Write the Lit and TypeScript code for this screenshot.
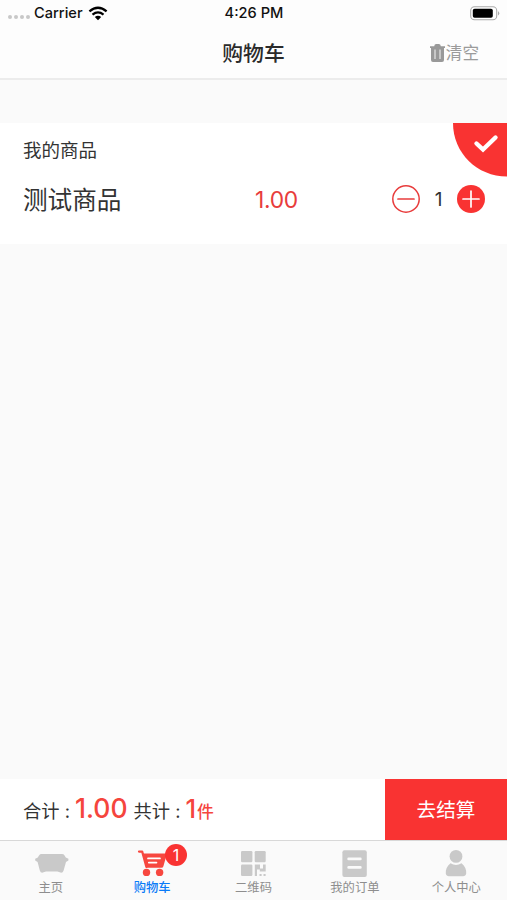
import { LitElement, html, css, svg } from "lit";
import { customElement, property, state } from "lit/decorators.js";
import { classMap } from "lit/directives/class-map.js";

const icons: Record<string, unknown> = {
  home: svg`<path d="M10.5 8H31Q32.6 8 33.6 9.4L34.8 11.4L37.4 12.8V14.4L35 16L32.6 24.4Q31.9 26.9 29.6 26.6L26.4 25.6H15L11.8 26.6Q9.5 26.9 8.8 24.4L6.6 16L4.2 14.4V12.8L6.8 11.4L8 9.4Q9 8 10.5 8Z"/>`,
  cart: svg`
    <path d="M7 5.6H10.2L14.4 21" fill="none" stroke="currentColor" stroke-width="2.2" stroke-linecap="round" stroke-linejoin="round"/>
    <path d="M10.5 7.4H35L31.4 20.2Q31 21.8 29.4 21.8H14.4Z"/>
    <path d="M16 12.4H28M16.8 16.6H24.5" stroke="#fff" stroke-width="1.7" stroke-linecap="round"/>
    <circle cx="14.5" cy="26.4" r="3.7"/><circle cx="27.6" cy="26.4" r="3.7"/>`,
  qr: svg`<rect x="8" y="5" width="11.4" height="11.3" rx="1.2"/><rect x="21.7" y="5" width="11" height="11.3" rx="1.2"/><rect x="8" y="18.6" width="11.4" height="11.4" rx="1.2"/>
    <path d="M21.8 18.6H27V22.6H30V18.6H32.7V25.6H26.8V23.6H24V30H21.8ZM26.5 28H28.6V30H26.5ZM30.5 28H32.6V30H30.5Z"/>`,
  order: svg`<rect x="7.4" y="4.3" width="24.4" height="26.6" rx="2"/><path d="M13.6 12.9H25.4M13.6 21.4H25.4" stroke="#fafafa" stroke-width="2.6" stroke-linecap="round"/>`,
  user: svg`<circle cx="20" cy="10.4" r="6.4"/><path d="M14.5 17.3Q20 20.5 25.5 17.3C29 20 30.6 24 30.2 27.5Q29.7 30.2 27 30.2H13Q10.3 30.2 9.8 27.5C9.4 24 11 20 14.5 17.3Z"/>`,
};

@customElement("status-bar")
class StatusBar extends LitElement {
  static styles = css`
    :host { display: grid; grid-template-columns: 1fr auto 1fr; align-items: center; height: 26px; padding: 0 7px 0 8px; box-sizing: border-box; font: 500 14.6px/26px Inter, sans-serif; color: #111; }
    .left { display: flex; align-items: center; }
    .dots { display: flex; gap: 2px; margin: 8px 4px 0 0; }
    .dot { width: 4px; height: 4px; border-radius: 50%; background: #c8c8c8; }
    .wifi { margin-left: 5px; }
    .battery { justify-self: end; }
    svg { display: block; }
  `;
  render() {
    return html`
      <div class="left">
        <div class="dots">${[0, 1, 2, 3].map(() => html`<i class="dot"></i>`)}</div>
        <span>Carrier</span>
        <svg class="wifi" width="20" height="15" viewBox="0 0 20 15">
          <path d="M1.4 5.3Q10-1.9 18.6 5.3M4.5 8.6Q10 4.2 15.5 8.6" fill="none" stroke="#000" stroke-width="2.3"/>
          <path d="M6.8 11Q10 8.4 13.2 11L10 14.2Z"/>
        </svg>
      </div>
      <span>4:26 PM</span>
      <svg class="battery" width="30" height="15" viewBox="0 0 30 15">
        <rect x=".7" y=".8" width="26" height="13" rx="3.8" fill="#fff" stroke="#aaa" stroke-width="1.1"/>
        <rect x="2.8" y="2.8" width="20" height="9" rx="1.8"/>
        <path d="M28 5Q30.6 7.3 28 9.6Z" fill="#aaa"/>
      </svg>`;
  }
}

@customElement("cart-item")
class CartItem extends LitElement {
  @property() shop = "";
  @property() name = "";
  @property() price = "";
  @property({ type: Number }) count = 1;
  static styles = css`
    :host { display: block; position: relative; height: 121px; box-sizing: border-box; padding: 13px 22px 0 23px; background: #fff; color: #333; font-family: Inter, "Noto Sans CJK SC", sans-serif; }
    .shop { font-size: 18.5px; line-height: 28px; }
    .row { display: grid; grid-template-columns: 232px 1fr auto; align-items: center; height: 40px; margin-top: 15px; }
    .name { font-size: 24.6px; line-height: 42px; }
    .price { font-size: 22.8px; line-height: 42px; color: #e83c3c; letter-spacing: -0.3px; }
    .row > span { height: 40px; }
    .stepper { display: flex; align-items: center; }
    .count { width: 37px; text-align: center; font-size: 19px; }
    svg { display: block; }
    .corner { position: absolute; top: 0; right: 0; }
  `;
  render() {
    return html`
      <div class="shop">${this.shop}</div>
      <div class="row">
        <span class="name">${this.name}</span>
        <span class="price">${this.price}</span>
        <div class="stepper">
          <svg width="28" height="28" viewBox="0 0 28 28" fill="none" stroke="#e83c3c" stroke-width="1.5"><circle cx="14" cy="14" r="13.2"/><path d="M6 14H22" stroke-width="1.7" stroke-linecap="round"/></svg>
          <span class="count">${this.count}</span>
          <svg width="28" height="28" viewBox="0 0 28 28"><circle cx="14" cy="14" r="14" fill="#f93332"/><path d="M6 14H22M14 6V22" stroke="#fff" stroke-width="1.7" stroke-linecap="round"/></svg>
        </div>
      </div>
      <svg class="corner" width="54" height="54" viewBox="0 0 54 54">
        <path d="M0 0H54V53.5C24 53.5 0 30 0 0Z" fill="#f93332"/>
        <path d="M23.5 20.5L30 26.5L42.5 14.5" fill="none" stroke="#fff" stroke-width="4.4" stroke-linecap="round" stroke-linejoin="miter"/>
      </svg>`;
  }
}

@customElement("tab-bar")
class TabBar extends LitElement {
  @property({ type: Number }) badge = 0;
  @state() private active = "cart";
  private tabs = [["home", "主页"], ["cart", "购物车"], ["qr", "二维码"], ["order", "我的订单"], ["user", "个人中心"]];
  static styles = css`
    :host { display: grid; grid-template-columns: repeat(5, 1fr); height: 60px; box-sizing: border-box; border-top: 1px solid #d8d8d8; background: #fafafa; font-family: "Noto Sans CJK SC", sans-serif; }
    .tab { display: flex; flex-direction: column; align-items: center; padding-top: 5px; color: #8e8e8e; }
    .icon { position: relative; width: 40px; height: 32px; color: #c9c9c9; }
    .icon svg { display: block; fill: currentColor; }
    .label { font-size: 12.3px; line-height: 18px; white-space: nowrap; }
    .active { color: #0a7bf7; }
    .active .icon { color: #f7473f; }
    .active .label { font-weight: 500; }
    .badge { position: absolute; left: 33px; top: -2px; width: 22px; height: 22px; border-radius: 50%; background: #f93332; color: #fff; font: 16px/22px Inter, sans-serif; text-align: center; }
  `;
  render() {
    return this.tabs.map(([id, label]) => html`
      <div class=${classMap({ tab: true, active: id === this.active })} @click=${() => (this.active = id)}>
        <div class="icon">
          <svg width="40" height="32" viewBox="0 0 40 32">${icons[id]}</svg>
          ${id === "cart" && this.badge ? html`<span class="badge">${this.badge}</span>` : ""}
        </div>
        <span class="label">${label}</span>
      </div>`);
  }
}

@customElement("app-root")
class AppRoot extends LitElement {
  static styles = css`
    :host { display: flex; flex-direction: column; width: 100%; height: 100vh; overflow: hidden; background: #fafafa; color: #333; font-family: Inter, "Noto Sans CJK SC", sans-serif; }
    .top { height: 80px; box-sizing: border-box; border-bottom: 2px solid #ececec; background: #fdfdfd; }
    .nav { display: grid; grid-template-columns: 1fr auto 1fr; align-items: center; height: 54px; box-sizing: border-box; padding: 2px 28px 0; }
    .title { grid-column: 2; font-size: 20.8px; font-weight: 500; line-height: 30px; color: #2b2b2b; }
    .clear { display: flex; align-items: center; justify-self: end; padding-bottom: 2px; font-size: 16.6px; line-height: 24px; color: #9b9b9b; }
    .clear svg { display: block; margin-right: 1px; }
    .list { flex: 1; padding-top: 43px; }
    .summary { display: flex; height: 61px; background: #fff; }
    .totals { flex: 1; display: flex; align-items: baseline; padding: 13px 0 0 23px; font-size: 18.3px; line-height: 32px; white-space: pre; }
    .sum { font-size: 26.5px; font-weight: 500; color: #f5453d; margin: 0 6px 0 5px; }
    .num { font-size: 25.5px; font-weight: 500; color: #f5453d; margin-left: 5px; }
    .unit { font-size: 16.8px; font-weight: 500; color: #f5453d; margin-left: 1px; }
    .pay { width: 122px; background: #f93332; color: #fff; font-size: 19.6px; line-height: 63px; text-align: center; }
  `;
  render() {
    return html`
      <div class="top">
        <status-bar></status-bar>
        <div class="nav">
          <span class="title">购物车</span>
          <span class="clear">
            <svg width="15" height="18" viewBox="0 0 15 18"><path d="M0 2.3H4.2Q4.4 0 6.2 0H8.8Q10.6 0 10.8 2.3H15V4H14V16Q14 18 12 18H3Q1 18 1 16V4H0Z" fill="#999"/><path d="M5 5.5V15M10 5.5V15" stroke="#e8e8e8" stroke-width="1.2"/></svg>清空</span>
        </div>
      </div>
      <div class="list"><cart-item shop="我的商品" name="测试商品" price="1.00" .count=${1}></cart-item></div>
      <div class="summary">
        <div class="totals"><span>合计 :</span><span class="sum">1.00</span><span>共计 :</span><span class="num">1</span><span class="unit">件</span></div>
        <div class="pay">去结算</div>
      </div>
      <tab-bar .badge=${1}></tab-bar>`;
  }
}
